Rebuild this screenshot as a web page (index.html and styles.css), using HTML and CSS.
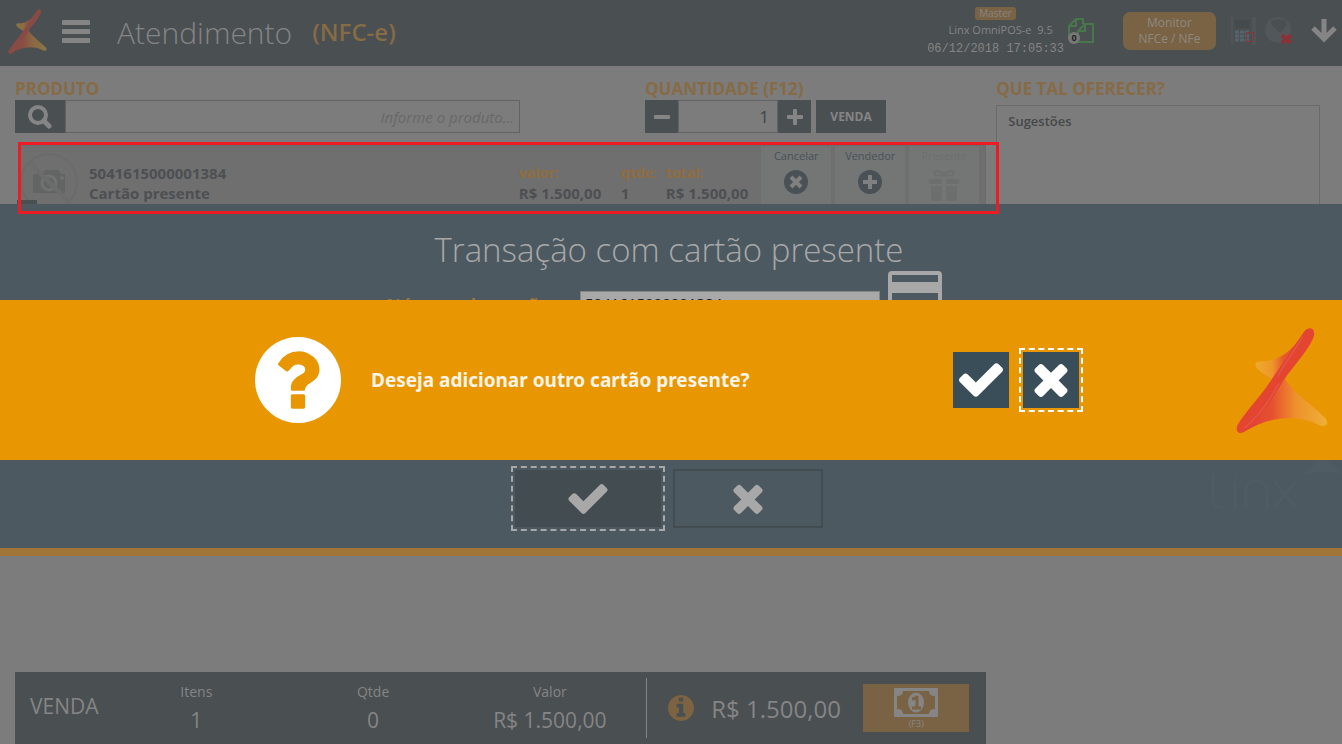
FILE: index.html
```html
<!DOCTYPE html>
<html lang="pt-BR">
<head>
    <meta charset="UTF-8">
    <meta name="viewport" content="width=device-width, initial-scale=1.0">
    <title>Atendimento (NFC-e) - Linx OmniPOS-e</title>
    <link rel="stylesheet" href="styles.css">
</head>
<body>

<!-- Shared icons -->
<svg class="sprite" aria-hidden="true">
    <defs>
        <linearGradient id="wingLow" x1="0" x2="1" y1="0" y2="0">
            <stop offset="0.1" stop-color="#e23f33"/>
            <stop offset="0.38" stop-color="#e5512f"/>
            <stop offset="0.65" stop-color="#ee912c"/>
            <stop offset="1" stop-color="#eeb035"/>
        </linearGradient>
        <linearGradient id="wingTop" x1="0" x2="1" y1="0" y2="0">
            <stop offset="0" stop-color="#eeaa2c"/>
            <stop offset="0.3" stop-color="#ee9629"/>
            <stop offset="0.5" stop-color="#e5562f"/>
            <stop offset="1" stop-color="#e4504c"/>
        </linearGradient>
    </defs>
    <symbol id="logo" viewBox="918 50 278 320">
        <path fill="url(#wingTop)" d="M1128 58C1095 115 1050 152 998 152C972 152 974 164 982 174C996 190 1012 194 1027 207L1080 170L1148 80z"/>
        <path fill="url(#wingLow)" d="M1065 205C1095 250 1150 285 1188 324C1200 342 1190 351 1174 347C1100 308 1020 318 940 366L925 345L1035 205z"/>
        <path fill="#e34530" d="M1126 60C1140 44 1160 54 1153 76C1138 120 1085 172 1063 208C1030 262 985 330 940 366C924 374 914 360 924 342C950 300 990 262 1026 206C1060 158 1095 102 1126 60z"/>
        <path fill="none" stroke="#e4564c" stroke-width="4" d="M1118 78C1090 130 1060 165 1044 198M1048 218C1020 270 985 320 945 352"/>
    </symbol>
    <symbol id="check" viewBox="121 334 1550 1188">
        <path d="M1671 566q0 40-28 68l-724 724-136 136q-28 28-68 28t-68-28l-136-136-362-362q-28-28-28-68t28-68l136-136q28-28 68-28t68 28l294 295 656-657q28-28 68-28t68 28l136 136q28 28 28 68z"/>
    </symbol>
    <symbol id="times" viewBox="302 334 1188 1220">
        <path d="M1490 1322q0 40-28 68l-136 136q-28 28-68 28t-68-28l-294-294-294 294q-28 28-68 28t-68-28l-136-136q-28-28-28-68t28-68l294-294-294-294q-28-28-28-68t28-68l136-136q28-28 68-28t68 28l294 294 294-294q28-28 68-28t68 28l136 136q28 28 28 68t-28 68l-294 294 294 294q28 28 28 68z"/>
    </symbol>
</svg>

<header class="navbar">
    <svg class="navbar-logo"><use href="#logo"/></svg>
    <button class="icon-button menu-button" aria-label="Menu">
        <svg width="28" height="23" viewBox="0 0 28 23" fill="currentColor">
            <rect width="28" height="5" rx="1"/><rect y="9" width="28" height="5" rx="1"/><rect y="18" width="28" height="5" rx="1"/>
        </svg>
    </button>
    <h1>Atendimento</h1>
    <span class="mode">(NFC-e)</span>

    <div class="session">
        <span class="badge">Master</span>
        <span class="version">Linx OmniPOS-e&nbsp; 9.5</span>
        <span class="clock">06/12/2018 17:05:33</span>
    </div>
    <div class="docs">
        <svg width="26" height="26" viewBox="0 0 26 26" fill="none" stroke="#47774b" stroke-width="2">
            <path d="M1 20V8L8 1H15V6M8 1V8H1M10 24V13L17 6H25V24zM17 6V13H10"/>
        </svg>
        <span class="docs-count">0</span>
    </div>
    <button class="monitor-button">Monitor<br>NFCe / NFe</button>
    <svg class="pinpad" width="25" height="28" viewBox="0 0 25 28">
        <path fill="#505558" d="M0 0h25v28H0z"/>
        <path fill="#4a4f52" d="M2 0h19v28H2z"/>
        <path fill="#454a4d" d="M4 3h14v8H4z"/>
        <path fill="none" stroke="#56646c" stroke-width="3" stroke-dasharray="4 1" d="M4 15h15M4 19h15M4 23h15"/>
        <path fill="none" stroke="#87363a" d="M15.500 15.500h7v9h-7z"/>
    </svg>
    <svg class="globe" width="27" height="28" viewBox="0 0 27 28">
        <circle cx="13" cy="13" r="13" fill="#51575a"/>
        <path fill="#4a4f52" d="M5 5l7-3 8 1 2 5-7 8-6-6z"/>
        <path stroke="#8c3135" stroke-width="4" d="M17 18l9 8M26 18l-9 8"/>
    </svg>
    <button class="icon-button down-button" aria-label="Mostrar mais">
        <svg width="26" height="24" viewBox="0 0 26 24" fill="none" stroke="currentColor" stroke-width="5">
            <path d="M13 0V20M2 9L13 20L24 9"/>
        </svg>
    </button>
</header>

<main class="content">
    <section class="sale">
        <div class="sale-form">
            <div class="field">
                <label for="product">PRODUTO</label>
                <div class="control">
                    <button class="dark-button search-button" aria-label="Buscar">
                        <svg width="26" height="24" viewBox="0 0 26 24" fill="none" stroke="currentColor">
                            <circle cx="11" cy="10" r="8" stroke-width="4"/><path stroke-width="5" stroke-linecap="round" d="M17 16l5 5"/>
                        </svg>
                    </button>
                    <input id="product" class="product-input" type="text" placeholder="Informe o produto...">
                </div>
            </div>
            <div class="field">
                <label for="quantity">QUANTIDADE (F12)</label>
                <div class="control">
                    <button class="dark-button step-button" aria-label="Diminuir">
                        <svg width="16" height="16" fill="currentColor"><rect y="6" width="16" height="4" rx="1"/></svg>
                    </button>
                    <input id="quantity" class="quantity-input" type="text" value="1">
                    <button class="dark-button step-button" aria-label="Aumentar">
                        <svg width="16" height="16" fill="currentColor"><rect y="6" width="16" height="4" rx="1"/><rect x="6" width="4" height="16" rx="1"/></svg>
                    </button>
                    <button class="dark-button sale-button">VENDA</button>
                </div>
            </div>
        </div>

        <article class="item">
            <div class="item-photo">
                <svg width="58" height="58" viewBox="0 0 58 58">
                    <path fill="#636464" d="M13 21h9l3-4h13l3 4h4v19H13z"/>
                    <circle cx="29" cy="30" r="7" fill="none" stroke="#717171" stroke-width="3"/>
                    <circle cx="42" cy="25" r="2" fill="#717171"/>
                    <circle cx="29" cy="29" r="28" fill="none" stroke="#6a6b6b" stroke-width="2"/>
                    <path stroke="#6c6c6c" stroke-width="4" d="M9 9l40 40"/>
                </svg>
                <span class="item-number"></span>
            </div>
            <div class="item-name">5041615000001384<br>Cartão presente</div>
            <dl class="item-values">
                <div><dt>valor:</dt><dd>R$ 1.500,00</dd></div>
                <div><dt>qtde:</dt><dd>1</dd></div>
                <div><dt>total:</dt><dd>R$ 1.500,00</dd></div>
            </dl>
            <div class="item-actions">
                <button>
                    Cancelar
                    <svg width="24" height="24" viewBox="0 0 24 24"><circle cx="12" cy="12" r="12" fill="currentColor"/><path class="cut" d="M7 7l10 10M17 7l-10 10"/></svg>
                </button>
                <button>
                    Vendedor
                    <svg width="24" height="24" viewBox="0 0 24 24"><circle cx="12" cy="12" r="12" fill="currentColor"/><path class="cut" d="M12 5v14M5 12h14"/></svg>
                </button>
                <button disabled>
                    Presente
                    <svg width="30" height="32" viewBox="0 0 30 32" fill="currentColor">
                        <path d="M0 9h13v5H0zM17 9h13v5H17zM2 16h11v15H2zM17 16h11v15H17z"/>
                        <path fill="none" stroke="currentColor" stroke-width="2" d="M15 5C11 0 5 0 5 3s6 3 10 2c4 1 10 1 10-2s-6-3-10 2z"/>
                    </svg>
                </button>
            </div>
            <div class="item-highlight"></div>
        </article>
    </section>

    <aside class="offers">
        <h2>QUE TAL OFERECER?</h2>
        <div class="offers-box">Sugestões</div>
    </aside>
</main>

<footer class="bottom">
    <div class="summary">
        <span class="summary-title">VENDA</span>
        <dl class="summary-values">
            <div><dt>Itens</dt><dd>1</dd></div>
            <div><dt>Qtde</dt><dd>0</dd></div>
            <div><dt>Valor</dt><dd>R$ 1.500,00</dd></div>
        </dl>
        <div class="summary-total">
            <svg width="26" height="26" viewBox="128 128 1536 1536" fill="#7c6443">
                <path d="M1152 1376v-160q0-14-9-23t-23-9h-96v-512q0-14-9-23t-23-9h-320q-14 0-23 9t-9 23v160q0 14 9 23t23 9h96v320h-96q-14 0-23 9t-9 23v160q0 14 9 23t23 9h448q14 0 23-9t9-23zm-128-896v-160q0-14-9-23t-23-9h-192q-14 0-23 9t-9 23v160q0 14 9 23t23 9h192q14 0 23-9t9-23zm640 416q0 209-103 385.500t-279.500 279.500-385.500 103-385.500-103-279.500-279.500-103-385.500 103-385.500 279.500-279.500 385.500-103 385.500 103 279.500 279.500 103 385.500z"/>
            </svg>
            <span>R$ 1.500,00</span>
        </div>
        <button class="pay-button" aria-label="Pagamento (F3)">
            <svg width="44" height="29" viewBox="0 0 44 29">
                <rect width="44" height="29" rx="1" fill="#858585"/>
                <path fill="#7a6344" d="M9 3h26q0 5 6 5v13q-6 0-6 5H9q0-5-6-5V8q6 0 6-5z"/>
                <ellipse cx="22" cy="14.500" rx="8" ry="10" fill="#858585"/>
                <path fill="none" stroke="#7a6344" stroke-width="3" d="M18 11q4 0 5-3v12M18 20h9"/>
            </svg>
            (F3)
        </button>
    </div>
</footer>

<!-- Gift card dialog -->
<div class="overlay">
    <form class="dialog">
        <h2>Transação com cartão presente</h2>
        <div class="dialog-field">
            <label for="cardNumber">Número do cartão:</label>
            <input id="cardNumber" type="text" value="5041615000001384">
            <svg width="54" height="44" viewBox="0 0 54 44">
                <rect x="2" y="2" width="50" height="40" rx="2" fill="none" stroke="#a8a8a8" stroke-width="4"/>
                <path fill="#a8a8a8" d="M2 11h50v11H2z"/>
            </svg>
        </div>
        <div class="dialog-actions">
            <button type="button" class="confirm focused" aria-label="Confirmar"><svg width="40" height="30"><use href="#check"/></svg></button>
            <button type="button" class="cancel" aria-label="Cancelar"><svg width="30" height="30"><use href="#times"/></svg></button>
        </div>
        <svg class="watermark" viewBox="0 0 132 100">
            <path fill="#505c63" d="M92 16C108 2 108 0 112 -4C118 0 122 4 132 14C116 10 104 12 92 16z"/>
            <path fill="none" stroke="#505c63" stroke-width="3" d="M3 14V38Q3 48 14 48M25 22V48M36 48V30Q36 21 46 21T57 30V48M64 21L86 48M86 21L64 48"/>
            <circle cx="25" cy="15" r="2" fill="#505c63"/>
        </svg>
    </form>
</div>

<!-- Question bar -->
<div class="overlay">
    <div class="question" role="alertdialog" aria-labelledby="questionText">
        <svg class="question-icon" viewBox="128 128 1536 1536" fill="#fff">
            <path d="M1024 1376v-192q0-14-9-23t-23-9h-192q-14 0-23 9t-9 23v192q0 14 9 23t23 9h192q14 0 23-9t9-23zm256-672q0-88-55.500-163t-138.500-116-170-41q-243 0-371 213-15 24 8 42l132 100q7 6 19 6 16 0 25-12 53-68 86-92 34-24 86-24 48 0 85.500 26t37.500 59q0 38-20 61t-68 45q-63 28-115.500 86.500t-52.500 125.500v36q0 14 9 23t23 9h192q14 0 23-9t9-23q0-19 21.500-49.500t54.500-49.500q32-18 49-28.500t46-35 44.500-48 28-60.500 12.500-81zm384 192q0 209-103 385.500t-279.500 279.500-385.500 103-385.500-103-279.500-279.500-103-385.500 103-385.500 279.500-279.500 385.500-103 385.500 103 279.500 279.500 103 385.500z"/>
        </svg>
        <p id="questionText">Deseja adicionar outro cartão presente?</p>
        <div class="question-actions">
            <button aria-label="Sim"><svg width="44" height="34"><use href="#check"/></svg></button>
            <button class="focused" aria-label="Não"><svg width="34" height="34"><use href="#times"/></svg></button>
        </div>
        <svg class="question-logo"><use href="#logo"/></svg>
    </div>
</div>

</body>
</html>
```
FILE: styles.css
```css
* {
    box-sizing: border-box;
}

body {
    font-family: "Open Sans", "Noto Sans", sans-serif;
    background-color: #7c7c7c;
    color: #4d4f53;
    margin: 0;
    min-height: 100vh;
    display: flex;
    flex-direction: column;
}

h1, h2, p, dl, dd {
    margin: 0;
}

button, input {
    font-family: inherit;
    border: none;
    border-radius: 0;
    padding: 0;
    margin: 0;
}

button {
    display: flex;
    align-items: center;
    justify-content: center;
    cursor: pointer;
}

.sprite {
    position: absolute;
    width: 0;
    height: 0;
}

/* Top bar */
.navbar {
    background-color: #4a4f52;
    color: #858585;
    height: 66px;
    padding: 0 5px 4px 8px;
    display: flex;
    align-items: center;
}

.navbar-logo {
    width: 39px;
    height: 45px;
    opacity: 0.4;
}

.icon-button {
    background: none;
    color: inherit;
}

.menu-button {
    margin: 0 27px 0 15px;
}

.navbar h1 {
    padding-top: 2px;
    font-size: 30px;
    font-weight: 300;
}

.mode {
    color: #866b45;
    font-size: 24px;
    font-weight: 600;
    margin-left: 20px;
}

.session {
    margin-left: auto;
    display: flex;
    flex-direction: column;
    align-items: center;
    padding-top: 2px;
    font-size: 11px;
    line-height: 20px;
}

.badge {
    background-color: #7a6344;
    border-radius: 3px;
    padding: 0 4px;
    font-size: 10px;
    line-height: 13px;
}

.version {
    margin-left: 10px;
}

.clock {
    font-family: "Liberation Mono", monospace;
    font-size: 12px;
    line-height: 18px;
}

.docs {
    position: relative;
    height: 26px;
    margin: 0 29px 0 4px;
}

.docs-count {
    position: absolute;
    left: 0;
    bottom: 0;
    width: 12px;
    height: 12px;
    border-radius: 50%;
    background-color: #777;
    color: #222;
    font-size: 9px;
    font-weight: bold;
    line-height: 12px;
    text-align: center;
}

.monitor-button {
    background-color: #7a6344;
    color: #8d8982;
    border-radius: 7px;
    width: 93px;
    height: 38px;
    font-size: 12px;
    line-height: 16px;
}

.pinpad {
    margin-left: 15px;
}

.globe {
    margin: 0 19px 0 9px;
}

/* Content */
.content {
    flex: 1;
    display: grid;
    grid-template-columns: 3fr 1fr;
    gap: 10px;
    padding: 11px 22px 0 15px;
}

.sale-form {
    display: grid;
    grid-template-columns: 52% 1fr;
    gap: 125px;
}

.field label,
.offers h2 {
    display: block;
    color: #866b45;
    font-size: 17px;
    font-weight: bold;
    line-height: 23px;
}

.control {
    display: flex;
    height: 33px;
}

.control input {
    background: transparent;
    border: 1px solid #606263;
    color: #3f4548;
    text-align: right;
    min-width: 0;
    font-size: 17px;
}

.dark-button {
    background-color: #4a4f52;
    color: #858585;
}

.search-button {
    width: 50px;
}

.control .product-input {
    flex: 1;
    padding-right: 5px;
    font-size: 15px;
}

.product-input::placeholder {
    color: #686868;
    font-style: italic;
}

.step-button {
    width: 33px;
}

.quantity-input {
    width: 100px;
    padding-right: 8px;
}

.sale-button {
    width: 70px;
    margin-left: 5px;
    font-size: 12px;
    font-weight: bold;
}

/* Sale item */
.item {
    position: relative;
    display: flex;
    height: 64px;
    margin: 12px 0 0 3px;
    background-color: #6f6f6f;
    border: 1px solid #6a6a6a;
    font-size: 15px;
    font-weight: bold;
    line-height: 20px;
}

.item-photo {
    position: relative;
    width: 70px;
    padding: 7px 1px;
}

.item-number {
    position: absolute;
    left: -2px;
    top: 54px;
    width: 20px;
    height: 12px;
    background-color: #4a4f52;
}

.item-name {
    flex: 1;
    padding-top: 17px;
}

.item-values {
    display: grid;
    grid-template-columns: 102px 45px auto;
    padding: 17px 13px 0 0;
}

.item-values dt {
    color: #8f6d40;
    font-size: 14px;
    font-weight: bold;
}

.item-actions {
    display: flex;
    gap: 4px;
    padding-right: 6px;
}

.item-actions button {
    flex-direction: column;
    justify-content: flex-start;
    gap: 4px;
    width: 70px;
    background-color: #737675;
    color: #495156;
    font-size: 11px;
    line-height: 20px;
}

.item-actions button:disabled {
    color: #6d6f6f;
}

.cut {
    stroke: #808080;
    stroke-width: 4;
}

.item-highlight {
    position: absolute;
    inset: -4px -14px -6px -1px;
    border: 3px solid #ed1c24;
    z-index: 30;
}

/* Offers */
.offers-box {
    min-height: 200px;
    margin-top: 5px;
    padding: 5px 11px;
    border: 1px solid #6a6a6a;
    color: #45484a;
    font-size: 13px;
    font-weight: 600;
    line-height: 20px;
}

/* Totals */
.bottom {
    display: grid;
    grid-template-columns: 3fr 1fr;
    gap: 10px;
    padding: 0 22px 0 15px;
}

.summary {
    display: flex;
    align-items: center;
    height: 72px;
    padding: 0 17px 0 15px;
    background-color: #4a4f52;
    color: #858585;
}

.summary-title {
    width: 78px;
    padding-bottom: 4px;
    font-size: 21px;
}

.summary-values {
    flex: 1;
    display: flex;
    text-align: center;
    border-right: 1px solid #858585;
    padding: 4px 8px 0 0;
}

.summary-values div {
    flex: 1;
}

.summary-values dt {
    font-size: 14px;
    line-height: 20px;
}

.summary-values dd {
    font-size: 21px;
    line-height: 36px;
}

.summary-total {
    display: flex;
    align-items: center;
    gap: 17px;
    width: 216px;
    padding-left: 21px;
    font-size: 24px;
}

.pay-button {
    flex-direction: column;
    width: 106px;
    height: 48px;
    padding-top: 2px;
    background-color: #7a6344;
    color: #858585;
    font-size: 9px;
    line-height: 13px;
}

/* Overlays */
.overlay {
    position: fixed;
    inset: 0;
    padding-top: 16px;
    display: flex;
    align-items: center;
    pointer-events: none;
}

.dialog {
    position: relative;
    pointer-events: auto;
    width: 100%;
    padding: 18px 0 20px;
    background-color: #4c5961;
    border-bottom: 8px solid #a07537;
}

.dialog h2 {
    color: #a8a8a8;
    font-size: 33px;
    font-weight: 300;
    line-height: 56px;
    text-align: center;
    padding-right: 4px;
}

.dialog-field {
    display: flex;
    justify-content: center;
    height: 191px;
    gap: 8px;
    padding: 13px 14px 0 0;
}

.dialog-field label {
    color: #a07537;
    font-size: 18px;
    font-weight: bold;
    line-height: 28px;
    width: 186px;
}

.dialog-field svg {
    margin-top: -20px;
}

.dialog-field input {
    width: 300px;
    height: 24px;
    padding: 0 4px;
    background-color: #a8a8a8;
    border: 1px solid #858585;
    color: #222;
    font-size: 15px;
}

.dialog-actions {
    display: flex;
    justify-content: center;
    gap: 8px;
    padding-right: 8px;
}

.dialog-actions button {
    width: 150px;
    height: 59px;
    background: transparent;
    border: 2px solid #434d51;
    fill: #a8a8a8;
}

.dialog-actions .confirm {
    width: 146px;
    height: 57px;
    margin: 1px 4px 0;
    background-color: #434d51;
}

.watermark {
    position: absolute;
    right: 0;
    bottom: -12px;
    width: 132px;
}

.focused {
    outline: 2px dashed #fff;
    outline-offset: 2px;
}

.dialog-actions .focused {
    outline-color: #a8a8a8;
}

.question {
    pointer-events: auto;
    display: flex;
    align-items: center;
    width: 100%;
    height: 160px;
    padding: 0 14px 0 19%;
    background-color: #e89602;
}

.question-icon {
    width: 86px;
    height: 86px;
}

.question p {
    margin-left: 30px;
    color: #fdf4e6;
    font-family: "Noto Sans", "Open Sans", sans-serif;
    font-size: 19px;
    font-weight: bold;
}

.question-actions {
    display: flex;
    gap: 14px;
    margin: 0 157px 0 auto;
}

.question-actions button {
    width: 56px;
    height: 56px;
    background-color: #394e59;
    fill: #fff;
}

.question-logo {
    width: 92px;
    height: 107px;
}
```
